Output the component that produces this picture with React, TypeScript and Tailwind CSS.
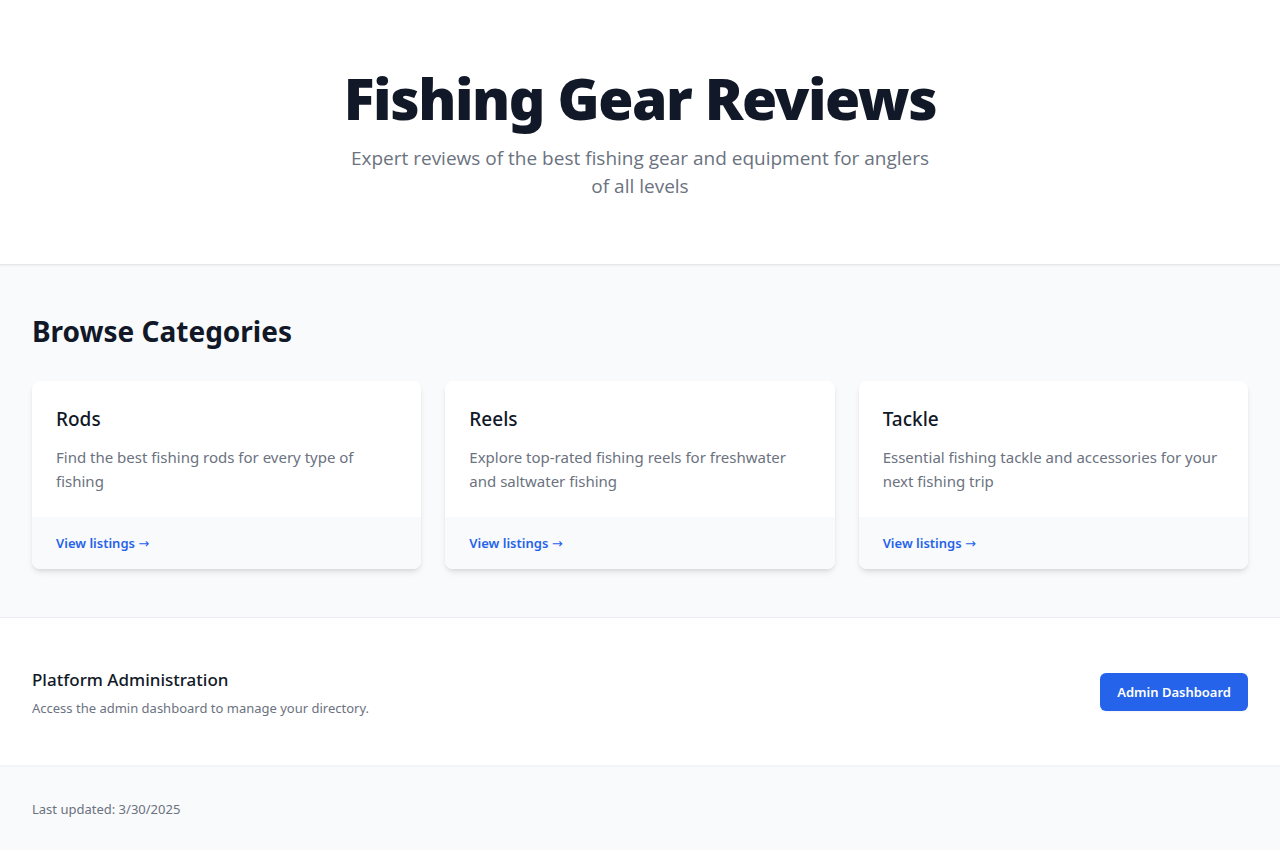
const categories = [
  { name: "Rods", text: "Find the best fishing rods for every type of fishing" },
  { name: "Reels", text: "Explore top-rated fishing reels for freshwater and saltwater fishing" },
  { name: "Tackle", text: "Essential fishing tackle and accessories for your next fishing trip" },
];

export default function App() {
  return (
    <div className="min-h-screen bg-[#f9fafb] font-['Noto_Sans',sans-serif] text-[#111827]">
      <header className="border-b border-gray-200 bg-white px-4 py-16 text-center shadow-[0_1px_2px_0_rgba(0,0,0,0.05)] sm:px-6 lg:px-8">
        <h1 className="text-[57px] leading-[68px] font-black tracking-tight">Fishing Gear Reviews</h1>
        <p className="mx-auto mt-3 max-w-[592px] font-['Open_Sans',sans-serif] text-[19px] leading-7 text-[#6b7280]">
          Expert reviews of the best fishing gear and equipment for anglers of all levels
        </p>
      </header>
      <main className="px-4 py-12 sm:px-6 lg:px-8">
        <h2 className="text-[28px] leading-9 font-bold">Browse Categories</h2>
        <div className="mt-8 grid gap-6 sm:grid-cols-2 lg:grid-cols-3">
          {categories.map((c) => (
            <article key={c.name} className="overflow-hidden rounded-lg bg-white shadow-md">
              <div className="p-6">
                <h3 className="text-[19px] leading-7 font-medium">{c.name}</h3>
                <p className="mt-3 text-[15px] leading-6 text-[#6b7280]">{c.text}</p>
              </div>
              <div className="bg-[#f9fafb] px-6 py-4">
                <a href="#" className="block text-[13px] leading-5 font-semibold text-[#2563eb]">
                  View listings <span className="font-['DejaVu_Sans',sans-serif] leading-none font-normal">→</span>
                </a>
              </div>
            </article>
          ))}
        </div>
      </main>
      <section className="border-t border-b-2 border-t-[#ebecef] border-b-gray-100 bg-white px-4 pt-12 pb-[47px] sm:px-6 lg:px-8">
        <div className="flex items-center justify-between gap-4">
          <div>
            <h2 className="text-[17px] leading-7 font-medium">Platform Administration</h2>
            <p className="mt-1 text-[13px] leading-5 text-[#6b7280]">Access the admin dashboard to manage your directory.</p>
          </div>
          <button className="rounded-md border border-transparent bg-[#2563eb] px-4 py-2 text-[13px] leading-5 font-semibold text-white shadow-[0_1px_2px_0_rgba(0,0,0,0.05)]">
            Admin Dashboard
          </button>
        </div>
      </section>
      <footer className="px-4 py-8 text-[13px] leading-5 text-[#6b7280] sm:px-6 lg:px-8">
        <p>Last updated: 3/30/2025</p>
      </footer>
    </div>
  );
}
